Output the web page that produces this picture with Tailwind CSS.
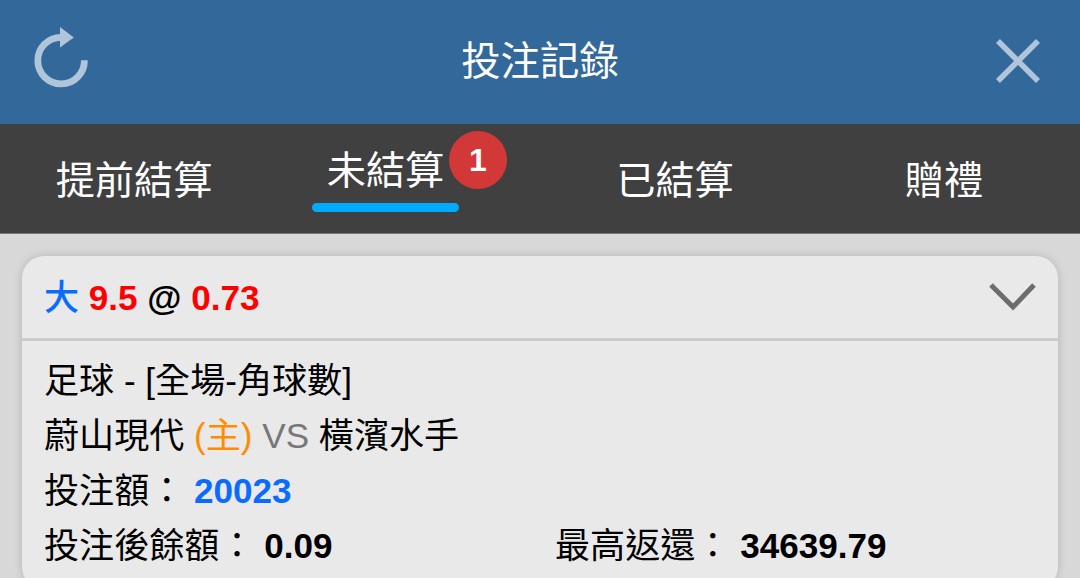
<!DOCTYPE html>
<html lang="zh-Hant">
<head>
    <meta charset="UTF-8">
    <meta name="viewport" content="width=device-width, initial-scale=1.0">
    <title>投注記錄</title>
    <script src="https://cdn.jsdelivr.net/npm/@tailwindcss/browser@4"></script>
</head>
<body class="h-screen overflow-hidden bg-[#d8d8d8] text-black font-['Liberation_Sans','Noto_Sans_CJK_TC',sans-serif]">
    <header class="h-[124px] bg-[#33689a] px-[34px] grid grid-cols-[54px_1fr_54px] items-center text-white">
        <button class="w-[54px] h-[62px] -mt-2">
            <svg class="w-[54px] h-[62px]" viewBox="0 0 54 62" fill="none">
                <path d="M27 10.3A23.3 23.3 0 1 0 50.4 33.2" stroke="#b1c5da" stroke-width="6.8"/>
                <path d="M26 0L39.8 10.5L26 20.5Z" fill="#b1c5da"/>
            </svg>
        </button>
        <h1 class="text-center text-[39.4px] leading-[56px] -mt-0.5">投注記錄</h1>
        <button class="w-[54px] h-[46px] flex justify-center">
            <svg class="w-[46px] h-[46px] -ml-[3px] -mt-px" viewBox="0 0 46 46" stroke="#b1c5da" stroke-width="5.6">
                <path d="M3 3L43 43M43 3L3 43"/>
            </svg>
        </button>
    </header>

    <nav class="h-[110px] bg-[#404040] border-b border-[#777] grid grid-cols-4 text-white text-[39.2px] leading-[56px]">
        <a class="flex justify-center pt-[29px] pr-[2px]">提前結算</a>
        <a class="flex items-start pl-[42px] pt-[7px]">
            <span class="w-[147px] pt-[12px] flex flex-col items-center">
                未結算
                <span class="mt-[4px] w-full h-[9px] rounded-full bg-[#00aaff]"></span>
            </span>
            <span class="-ml-[10px] size-[58px] rounded-full bg-[#d33838] text-[32px] leading-[58px] font-bold text-center">1</span>
        </a>
        <a class="flex justify-center pt-[29px]">已結算</a>
        <a class="flex justify-center pt-[29px] pr-[2px]">贈禮</a>
    </nav>

    <main class="px-[22px] pt-[22px]">
        <div class="h-[333px] rounded-[22px] bg-[#e9e9e9] shadow-[0_0_9px_rgba(0,0,0,0.17)] text-[35.1px]">
            <div class="h-[85px] px-[22px] border-b-[3px] border-[#cbcbcb] flex items-center justify-between font-bold">
                <p class="leading-[55px] whitespace-pre"><span class="font-medium text-[#0a6cff]">大</span> <span class="text-[#ff0000]">9.5</span> @ <span class="text-[#ff0000]">0.73</span></p>
                <svg class="w-[48px] h-[30px]" viewBox="0 0 48 30" fill="none" stroke="#6d6d6d" stroke-width="5">
                    <path d="M3 3L25 25L46 3"/>
                </svg>
            </div>
            <div class="px-[22px] pt-[12px] leading-[55px]">
                <p>足球 - [全場-角球數]</p>
                <p>蔚山現代 <span class="text-[#ff8c00]">(主)</span> <span class="text-[#777]">VS</span> 橫濱水手</p>
                <p>投注額： <b class="text-[#0a6cff]">20023</b></p>
                <div class="flex">
                    <p class="w-[511px]">投注後餘額： <b>0.09</b></p>
                    <p>最高返還： <b>34639.79</b></p>
                </div>
            </div>
        </div>
    </main>
</body>
</html>
